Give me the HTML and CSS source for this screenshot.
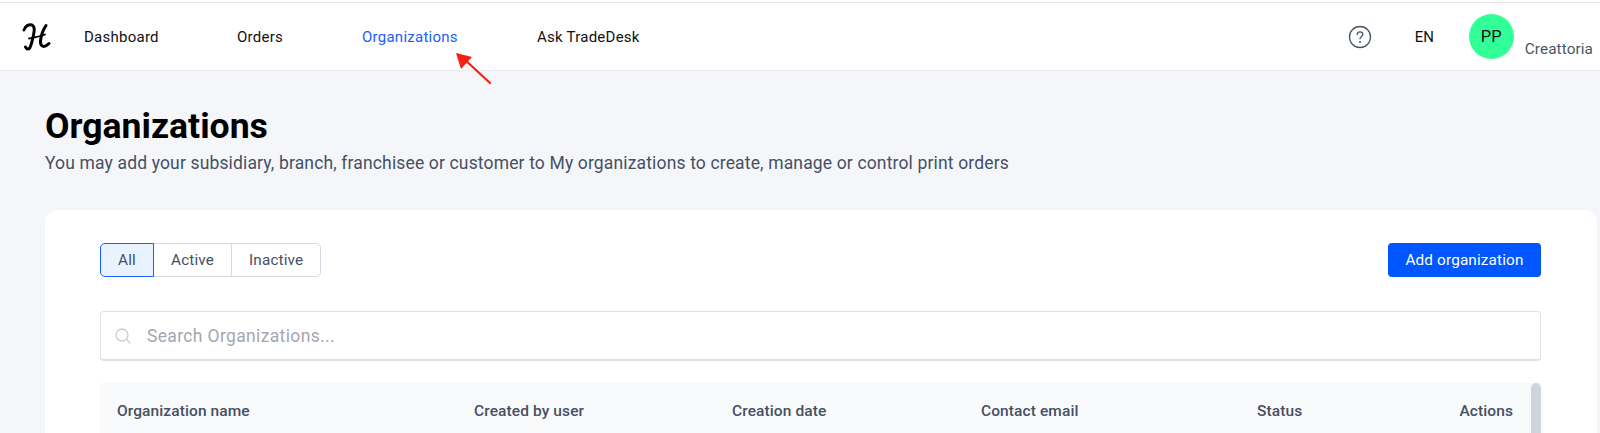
FILE: index.html
```html
<!DOCTYPE html>
<html lang="en">
<head>
<meta charset="utf-8">
<title>Organizations</title>
<link rel="stylesheet" href="styles.css">
</head>
<body>
<header class="topbar">
  <svg class="logo" width="30" height="30" viewBox="0 0 30 30" fill="none" stroke="#000" stroke-linecap="round" stroke-linejoin="round">
    <path d="M3 8C4 4 8 2 11 3C14 4.500 13.500 9 12.500 13C11.500 18 10.500 22 9 25.500C8 27.500 5.500 27.500 4.500 25" stroke-width="3"/>
    <path d="M8 16.500C13 15.500 19 14.500 24 12.500" stroke-width="1.800"/>
    <path d="M25 3.500C22 8 20 13.500 19.500 19C19.200 24.500 23 26.500 28 21.500" stroke-width="3"/>
  </svg>
  <nav class="nav">
    <a class="nav-link nav-dashboard">Dashboard</a>
    <a class="nav-link nav-orders">Orders</a>
    <a class="nav-link nav-active nav-orgs">Organizations</a>
    <a class="nav-link">Ask TradeDesk</a>
  </nav>
  <div class="top-right">
    <svg class="help" width="24" height="24" viewBox="0 0 24 24" fill="none" stroke="#4a5568" stroke-width="1.300" stroke-linecap="round">
      <circle cx="12" cy="12" r="10.500"/>
      <path d="M9.200 9.500C9.300 7.800 10.500 6.900 12 6.900C13.600 6.900 14.800 7.900 14.800 9.400C14.800 11.400 12 11.500 12 13.800"/>
      <circle cx="12" cy="17" r="0.400"/>
    </svg>
    <span class="lang">EN</span>
    <span class="avatar">PP</span>
    <span class="company">Creattoria</span>
  </div>
</header>
<svg class="arrow" width="40" height="40" viewBox="0 0 40 40" fill="none">
  <path d="M35 31L8 6" stroke="#f5200f" stroke-width="2.200" stroke-linecap="round"/>
  <path d="M1 1L17 5L6 17Z" fill="#f5200f"/>
</svg>
<main class="page">
  <h1 class="title">Organizations</h1>
  <p class="subtitle">You may add your subsidiary, branch, franchisee or customer to My organizations to create, manage or control print orders</p>
  <section class="card">
    <div class="toolbar">
      <div class="tabs">
        <button class="tab tab-on">All</button>
        <button class="tab">Active</button>
        <button class="tab">Inactive</button>
      </div>
      <button class="add">Add organization</button>
    </div>
    <div class="search">
      <svg width="18" height="18" viewBox="0 0 18 18" fill="none" stroke="#c9cdd4" stroke-width="1.300" stroke-linecap="round">
        <circle cx="8" cy="8" r="6"/>
        <path d="M12.500 12.500L16 16"/>
      </svg>
      <span class="placeholder">Search Organizations...</span>
    </div>
    <div class="table-head">
      <span class="col col-name">Organization name</span>
      <span class="col col-user">Created by user</span>
      <span class="col col-date">Creation date</span>
      <span class="col col-email">Contact email</span>
      <span class="col col-status">Status</span>
      <span class="col col-actions">Actions</span>
      <span class="scrollbar"></span>
    </div>
  </section>
</main>
</body>
</html>
```
FILE: styles.css
```css
* { box-sizing: border-box; }
html, body { margin: 0; padding: 0; height: 433px; overflow: hidden; }
body { background: #f4f6fa; font-family: Roboto, "Liberation Sans", sans-serif; color: #000; position: relative; }
.topbar { height: 69px; background: #fff; border-top: 1px solid #e6e6e6; border-bottom: 1px solid #e8eaef; box-shadow: 0 -2px 0 #fff; margin-top: 2px; display: flex; align-items: center; padding: 0 7px 0 21px; }
.logo { flex: none; margin-right: 33px; }
.nav { display: flex; }
.nav-link { font-size: 15px; letter-spacing: 0.250px; color: #111; }
.nav-dashboard { width: 153px; }
.nav-orders { width: 125px; }
.nav-orgs { width: 175px; }
.nav-active { color: #1a5cff; }
.top-right { margin-left: auto; display: flex; align-items: center; position: relative; }
.help { margin-right: 43px; }
.lang { font-size: 15px; color: #111; margin-right: 33px; width: 21px; }
.avatar { width: 45px; height: 45px; border-radius: 50%; background: #33ff99; display: flex; align-items: center; justify-content: center; font-size: 16.500px; color: #111; margin-right: 11px; }
.company { font-size: 15.300px; color: #4a5568; margin-top: 25px; letter-spacing: 0.100px; }
.arrow { position: absolute; left: 455px; top: 52px; }
.page { padding: 35px 3px 0 45px; }
.title { margin: 0; font-size: 35.600px; line-height: 40px; font-weight: 700; color: #000; }
.subtitle { margin: 6px 0 0; font-size: 17.500px; line-height: 22px; letter-spacing: 0.150px; color: #465063; }
.card { margin-top: 36px; background: #fff; border-radius: 12px; padding: 33px 56px 0 55px; height: 240px; }
.toolbar { display: flex; justify-content: space-between; align-items: center; }
.tabs { display: flex; }
.tab { height: 34px; margin: 0; border: 1px solid #d5d9e2; border-left-width: 0; background: #fff; font: 15.300px Roboto, sans-serif; letter-spacing: 0.150px; color: #465063; padding: 0 17px; }
.tab:first-child { border-left-width: 1px; border-color: #1a5cff; background: #e9f3ff; border-radius: 5px 0 0 5px; width: 54px; }
.tab:last-child { border-radius: 0 5px 5px 0; }
.add { height: 34px; width: 153px; border: 0; border-radius: 4px; background: #0057ff; color: #fff; font: 15.300px Roboto, sans-serif; letter-spacing: 0.150px; }
.search { margin-top: 34px; height: 50px; border: 1px solid #dfe1e8; border-width: 1px 1px 2px 1px; border-radius: 4px; display: flex; align-items: center; padding-left: 13px; gap: 15px; }
.placeholder { font-size: 17.500px; letter-spacing: 0.350px; color: #a3a7af; }
.table-head { margin-top: 22px; height: 60px; background: #f9fafc; display: flex; align-items: flex-start; padding-top: 19px; position: relative; font-size: 15.500px; font-weight: 500; color: #465063; letter-spacing: 0.100px; }
.col { display: block; line-height: 18px; }
.col-name { width: 374px; padding-left: 17px; }
.col-user { width: 258px; }
.col-date { width: 249px; }
.col-email { width: 276px; }
.col-status { width: 200px; }
.col-actions { position: absolute; right: 28px; }
.scrollbar { position: absolute; right: 0; top: 0; width: 10px; height: 60px; background: #d0d4dc; border-radius: 5px 5px 0 0; }
```
